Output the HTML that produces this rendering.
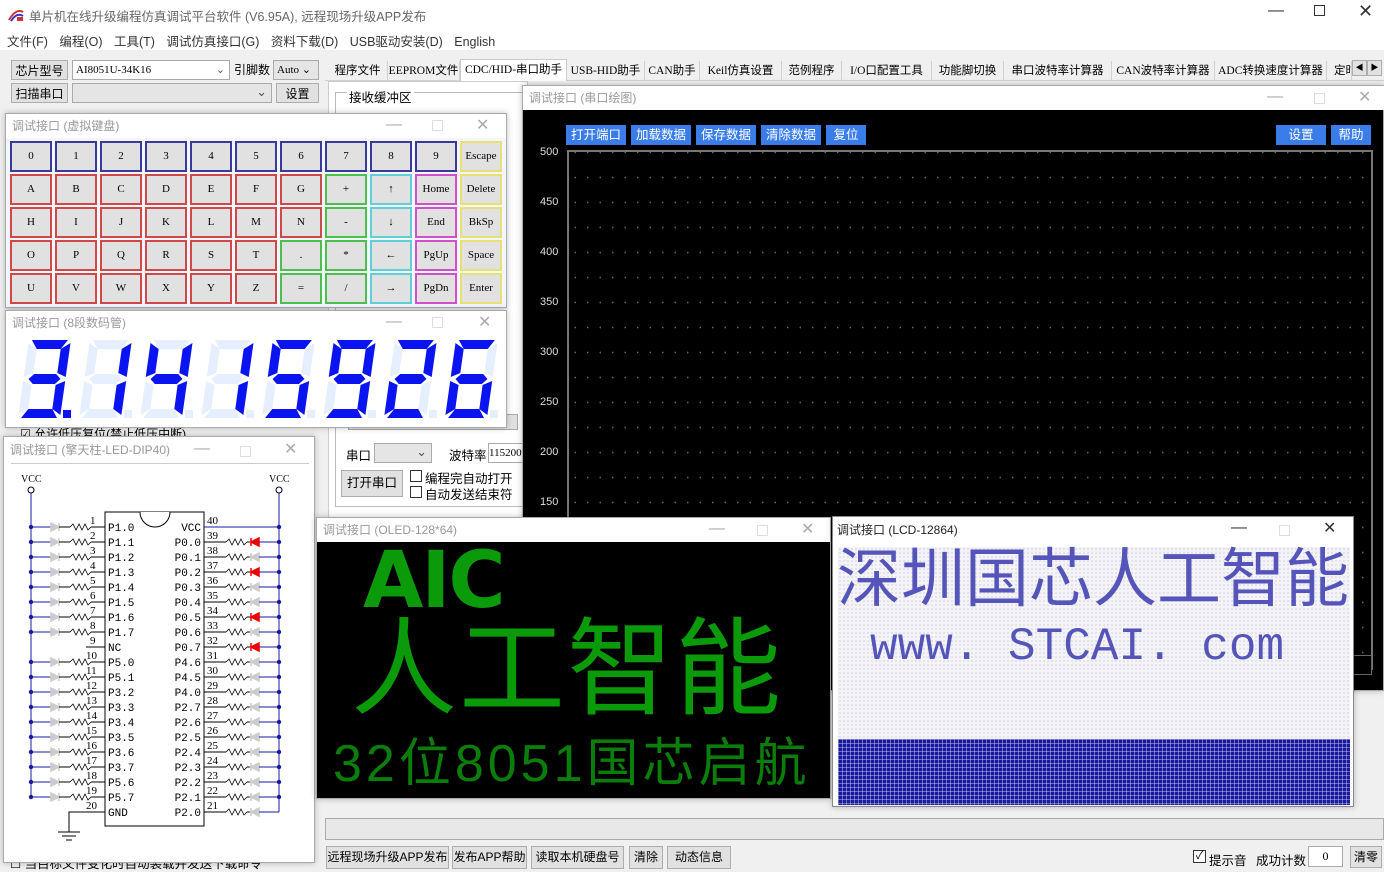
<!DOCTYPE html>
<html><head><meta charset="utf-8">
<style>
*{box-sizing:border-box;margin:0;padding:0}
body{width:1384px;height:870px;overflow:hidden;background:#f0f0f0;font-family:"Liberation Sans","Noto Sans CJK SC",sans-serif;font-size:13px;color:#000;position:relative}
.a{position:absolute;white-space:nowrap}
.btn{position:absolute;background:#e1e1e1;border:1px solid #adadad;text-align:center;font-size:12px;line-height:20px;white-space:nowrap;overflow:hidden}
.win{position:absolute;background:#fff;border:1px solid #aaa;box-shadow:0 0 6px rgba(0,0,0,.25)}
.tt{position:absolute;left:6px;top:3px;font-size:12px;color:#999;white-space:nowrap}
.ctl{position:absolute;top:0;font-size:16px;color:#aaa}
.mono{font-family:"Liberation Mono","Noto Sans CJK SC",monospace}
.tab{position:absolute;top:61px;height:20px;border-right:1px solid #d0d0d0;font-size:11.5px;line-height:20px;text-align:center;font-family:"Liberation Serif","Noto Sans CJK SC",serif;white-space:nowrap;overflow:hidden}
.key{position:absolute;width:42px;height:31px;background:#e1e1e1;border:2px solid;text-align:center;line-height:27px;font-family:"Liberation Serif",serif;font-size:11px}
.pb{position:absolute;top:125px;height:20px;background:#3a7de8;color:#fff;font-size:12.5px;line-height:20px;text-align:center}
.yl{position:absolute;left:540px;color:#ddd;font-size:11px}
</style></head><body>
<div class="a" style="left:0;top:0;width:1384px;height:28px;background:#fff"></div>
<svg class="a" style="left:8px;top:6px" width="16" height="16"><path d="M1 14 Q8 2 15 6" stroke="#c33" stroke-width="2" fill="none"/><path d="M3 15 Q9 6 15 10" stroke="#33c" stroke-width="2" fill="none"/><rect x="9" y="11" width="6" height="4" fill="#c33"/></svg>
<div class="a" style="left:29px;top:6px;font-size:12.5px;color:#666">单片机在线升级编程仿真调试平台软件 (V6.95A), 远程现场升级APP发布</div>
<div class="a" style="left:1268px;top:2px;font-size:16px;color:#333">—</div>
<div class="a" style="left:1314px;top:5px;width:11px;height:11px;border:1px solid #333"></div>
<div class="a" style="left:1358px;top:1px;font-size:18px;color:#333">✕</div>
<div class="a" style="left:0;top:28px;width:1384px;height:22px;background:#fff"></div>
<div class="a" style="left:7px;top:31px;font-size:12.5px;color:#333;word-spacing:8px">文件(F) 编程(O) 工具(T) 调试仿真接口(G) 资料下载(D) USB驱动安装(D) English</div>
<div class="btn" style="left:11px;top:60px;width:57px;height:20px">芯片型号</div>
<div class="a" style="left:72px;top:60px;width:158px;height:20px;background:#fff;border:1px solid #aaa;font-size:11px;line-height:18px;padding-left:3px;font-family:'Liberation Serif',serif">AI8051U-34K16<span style="position:absolute;right:4px;color:#555">⌄</span></div>
<div class="a" style="left:234px;top:61px;font-size:12px">引脚数</div>
<div class="a" style="left:273px;top:60px;width:46px;height:20px;background:#e5e5e5;border:1px solid #aaa;font-size:11px;line-height:18px;padding-left:3px;font-family:'Liberation Serif',serif">Auto ⌄</div>
<div class="btn" style="left:11px;top:83px;width:57px;height:20px">扫描串口</div>
<div class="a" style="left:72px;top:83px;width:200px;height:20px;background:#e5e5e5;border:1px solid #aaa"><span style="position:absolute;right:4px;color:#555">⌄</span></div>
<div class="btn" style="left:276px;top:83px;width:43px;height:20px">设置</div>
<div class="a" style="left:325px;top:80px;width:1059px;height:1px;background:#d0d0d0"></div>
<div class="tab" style="left:328px;width:60px">程序文件</div>
<div class="tab" style="left:388px;width:72px">EEPROM文件</div>
<div class="tab" style="left:460px;top:59px;height:22px;width:107px;background:#fff;border:1px solid #ccc;border-bottom:none">CDC/HID-串口助手</div>
<div class="tab" style="left:567px;width:78px">USB-HID助手</div>
<div class="tab" style="left:645px;width:55px">CAN助手</div>
<div class="tab" style="left:700px;width:82px">Keil仿真设置</div>
<div class="tab" style="left:782px;width:60px">范例程序</div>
<div class="tab" style="left:842px;width:90px">I/O口配置工具</div>
<div class="tab" style="left:932px;width:72px">功能脚切换</div>
<div class="tab" style="left:1004px;width:108px">串口波特率计算器</div>
<div class="tab" style="left:1112px;width:103px">CAN波特率计算器</div>
<div class="tab" style="left:1215px;width:112px">ADC转换速度计算器</div>
<div class="tab" style="left:1327px;width:25px;text-align:left;padding-left:7px">定时</div>
<div class="btn" style="left:1352px;top:60px;width:15px;height:16px;font-size:8px;line-height:14px">◀</div>
<div class="btn" style="left:1367px;top:60px;width:15px;height:16px;font-size:8px;line-height:14px">▶</div>
<div class="a" style="left:328px;top:81px;width:200px;height:437px;background:#fff;border:1px solid #ccc"></div>
<div class="a" style="left:335px;top:92px;width:190px;height:415px;border:1px solid #bbb"></div>
<div class="a" style="left:347px;top:87px;background:#fff;padding:0 2px;font-size:12.5px">接收缓冲区</div>
<div class="a" style="left:346px;top:445px;font-size:12.5px">串口</div>
<div class="a" style="left:374px;top:443px;width:58px;height:20px;background:#e5e5e5;border:1px solid #aaa"><span style="position:absolute;right:4px;color:#555">⌄</span></div>
<div class="a" style="left:449px;top:445px;font-size:12.5px">波特率</div>
<div class="a" style="left:488px;top:443px;width:36px;height:20px;background:#fff;border:1px solid #aaa;font-size:11px;line-height:18px;font-family:'Liberation Serif',serif;overflow:hidden">115200</div>
<div class="btn" style="left:341px;top:470px;width:62px;height:27px;line-height:25px;font-size:12.5px">打开串口</div>
<div class="a" style="left:410px;top:470px;width:12px;height:12px;border:1px solid #333;background:#fff"></div>
<div class="a" style="left:425px;top:468px;font-size:12.5px">编程完自动打开</div>
<div class="a" style="left:410px;top:486px;width:12px;height:12px;border:1px solid #333;background:#fff"></div>
<div class="a" style="left:425px;top:484px;font-size:12.5px">自动发送结束符</div>
<div class="a" style="left:348px;top:414px;width:170px;height:16px;border:1px solid #aaa;background:#e1e1e1"></div>
<div class="a" style="left:20px;top:425px;font-size:12px">☑ 允许低压复位(禁止低压中断)</div>
<div class="a" style="left:10px;top:853px;font-size:12.5px">☐ 当目标文件变化时自动装载并发送下载命令</div>
<div class="win" style="left:522px;top:85px;width:862px;height:606px;background:#000">
<div class="a" style="left:0;top:0;width:862px;height:24px;background:#fff"></div>
<div class="tt">调试接口 (串口绘图)</div>
<div class="ctl" style="left:744px;top:2px">—</div><div class="a" style="left:791px;top:7px;width:11px;height:11px;border:1px solid #ddd"></div><div class="ctl" style="left:835px;top:1px">✕</div>
</div>
<div class="pb" style="left:566px;width:60px">打开端口</div>
<div class="pb" style="left:631px;width:60px">加载数据</div>
<div class="pb" style="left:696px;width:60px">保存数据</div>
<div class="pb" style="left:761px;width:60px">清除数据</div>
<div class="pb" style="left:826px;width:40px">复位</div>
<div class="pb" style="left:1276px;width:50px">设置</div>
<div class="pb" style="left:1331px;width:40px">帮助</div>
<div class="a" style="left:567px;top:150px;width:806px;height:520px;border:2px solid #777;border-bottom:none;background-image:radial-gradient(circle,#666 0.7px,transparent 1px);background-size:12.5px 25px;background-position:0 -12px"></div>
<div class="yl" style="top:146px">500</div><div class="yl" style="top:196px">450</div><div class="yl" style="top:246px">400</div><div class="yl" style="top:296px">350</div><div class="yl" style="top:346px">300</div><div class="yl" style="top:396px">250</div><div class="yl" style="top:446px">200</div><div class="yl" style="top:496px">150</div>
<div class="a" style="left:1352px;top:655px;width:20px;height:20px;border:1px solid #666"></div>
<div class="win" id="kb" style="left:5px;top:113px;width:502px;height:195px;background:#f3f6fc">
<div class="a" style="left:0;top:0;width:500px;height:24px;background:#fff"></div>
<div class="tt">调试接口 (虚拟键盘)</div>
<div class="ctl" style="left:380px;top:2px">—</div><div class="a" style="left:426px;top:6px;width:11px;height:11px;border:1px solid #ddd"></div><div class="ctl" style="left:470px;top:1px">✕</div>
</div>
<div class="win" style="left:5px;top:310px;width:502px;height:118px">
<div class="tt">调试接口 (8段数码管)</div>
<div class="ctl" style="left:380px;top:2px">—</div><div class="a" style="left:426px;top:6px;width:11px;height:11px;border:1px solid #ddd"></div><div class="ctl" style="left:472px;top:1px">✕</div>
<svg id="seg" class="a" style="left:0;top:22px" width="500" height="95"></svg>
</div>
<div class="win" style="left:3px;top:436px;width:312px;height:427px">
<div class="tt" style="top:4px">调试接口 (擎天柱-LED-DIP40)</div>
<div class="ctl" style="left:190px;top:3px">—</div><div class="a" style="left:236px;top:9px;width:11px;height:11px;border:1px solid #ddd"></div><div class="ctl" style="left:280px;top:2px">✕</div>
<div class="a" style="left:7px;top:26px;width:298px;height:1px;background:#ccc"></div>
</div>
<svg id="dip" class="a" style="left:0;top:0" width="320" height="870"></svg>
<div class="win" style="left:316px;top:517px;width:515px;height:282px;background:#000;overflow:hidden">
<div class="a" style="left:0;top:0;width:515px;height:24px;background:#fff"></div>
<div class="tt">调试接口 (OLED-128*64)</div>
<div class="ctl" style="left:392px;top:2px">—</div><div class="a" style="left:440px;top:7px;width:11px;height:11px;border:1px solid #ddd"></div><div class="ctl" style="left:484px;top:1px">✕</div>
<div class="a" style="left:46px;top:18px;font-size:78px;font-weight:bold;color:#0a9a0a;letter-spacing:-2px;font-family:'DejaVu Sans',sans-serif">AIC</div>
<div class="a" style="left:34px;top:92px;font-size:106px;line-height:120px;color:#0a9a0a;font-family:'WenQuanYi Zen Hei',sans-serif;letter-spacing:2px">人工智能</div>
<div class="a" style="left:16px;top:216px;font-size:52px;line-height:60px;color:#0b7d0b;font-family:'WenQuanYi Zen Hei',sans-serif;letter-spacing:4px">32位8051国芯启航</div>
</div>
<div class="win" style="left:832px;top:516px;width:522px;height:291px;border-color:#888">
<div class="a" style="left:4px;top:4px;font-size:12px;color:#222">调试接口 (LCD-12864)</div>
<div class="ctl" style="left:398px;top:2px;color:#333">—</div><div class="a" style="left:446px;top:8px;width:11px;height:11px;border:1px solid #ddd"></div><div class="ctl" style="left:490px;top:1px;color:#333">✕</div>
<div class="a" style="left:5px;top:30px;width:512px;height:256px;background:#f4f4f8;background-image:radial-gradient(circle,#e2e2e8 1.1px,transparent 1.3px);background-size:4px 4px"></div>
<div class="a" style="left:4px;top:26px;font-size:64px;line-height:72px;color:#3a3ab0;font-family:'WenQuanYi Zen Hei',sans-serif;opacity:.85">深圳国芯人工智能</div>
<div class="a" style="left:37px;top:100px;font-size:46px;line-height:60px;color:#3a3ab0;font-family:'Liberation Mono',monospace;letter-spacing:0px;opacity:.85">www. STCAI. com</div>
<div class="a" style="left:5px;top:222px;width:512px;height:66px;background:#1a1aa0;background-image:linear-gradient(90deg,rgba(255,255,255,.35) 1px,transparent 1px),linear-gradient(rgba(255,255,255,.35) 1px,transparent 1px);background-size:4px 4px"></div>
</div>
<div class="a" style="left:325px;top:818px;width:1059px;height:22px;background:#e8e8e8;border:1px solid #aaa"></div>
<div class="btn" style="left:326px;top:846px;width:123px;height:23px">远程现场升级APP发布</div>
<div class="btn" style="left:452px;top:846px;width:75px;height:23px">发布APP帮助</div>
<div class="btn" style="left:531px;top:846px;width:93px;height:23px">读取本机硬盘号</div>
<div class="btn" style="left:629px;top:846px;width:34px;height:23px">清除</div>
<div class="btn" style="left:667px;top:846px;width:64px;height:23px">动态信息</div>
<div class="a" style="left:1193px;top:850px;width:13px;height:13px;border:1px solid #333;background:#fff;font-size:11px;line-height:11px;text-align:center">✓</div>
<div class="a" style="left:1209px;top:850px;font-size:12.5px">提示音</div>
<div class="a" style="left:1256px;top:850px;font-size:12.5px">成功计数</div>
<div class="a" style="left:1308px;top:846px;width:35px;height:21px;background:#fff;border:1px solid #aaa;text-align:center;font-size:12px;line-height:19px;font-family:'Liberation Serif',serif">0</div>
<div class="btn" style="left:1350px;top:846px;width:32px;height:22px">清零</div>
<script>
var rows=[["0","1","2","3","4","5","6","7","8","9","Escape"],["A","B","C","D","E","F","G","+","↑","Home","Delete"],["H","I","J","K","L","M","N","-","↓","End","BkSp"],["O","P","Q","R","S","T",".","*","←","PgUp","Space"],["U","V","W","X","Y","Z","=","/","→","PgDn","Enter"]];
var cols={b:"#3a3a9a",r:"#d04848",g:"#4cc04c",c:"#60d0d8",m:"#d050c8",y:"#e8e070"};
var kb=document.getElementById('kb'),h='';
rows.forEach(function(r,ri){r.forEach(function(k,ci){var c;
if(ci==10)c=cols.y;else if(ci==9)c=ri==0?cols.b:cols.m;else if(ci==8)c=ri==0?cols.b:cols.c;else if(ri==0)c=cols.b;
else if(ci==7)c=cols.g;else if(ci==6)c=(ri<=2)?cols.r:cols.g;else c=cols.r;
h+='<div class="key" style="left:'+(4+45*ci)+'px;top:'+(27+33*ri)+'px;border-color:'+c+'">'+k+'</div>';});});
kb.insertAdjacentHTML('beforeend',h);
var S={0:"abcdef",1:"bc",2:"abdeg",3:"abcdg",4:"bcfg",5:"acdfg",6:"acdefg",7:"abc",8:"abcdefg",9:"abcdfg"};
var digs=["3","1","4","1","5","9","2","6"],s='';
function seg(x0,on){var o='';var W=42,H=78,t=9;
var P={a:[[3,0],[W-3,0],[W-9,t],[9,t]],d:[[3,H],[W-3,H],[W-9,H-t],[9,H-t]],g:[[5,H/2],[10,H/2-5],[W-10,H/2-5],[W-5,H/2],[W-10,H/2+5],[10,H/2+5]],
f:[[0,3],[t,9],[t,H/2-6],[0,H/2-2]],e:[[0,H/2+2],[t,H/2+6],[t,H-9],[0,H-3]],b:[[W,3],[W-t,9],[W-t,H/2-6],[W,H/2-2]],c:[[W,H/2+2],[W-t,H/2+6],[W-t,H-9],[W,H-3]]};
for(var k in P){var pts=P[k].map(function(p){return (x0+p[0]+(H-p[1])*0.14).toFixed(1)+','+(7+p[1])}).join(' ');
o+='<polygon points="'+pts+'" fill="'+(on.indexOf(k)>=0?'#0a14f0':'#e6efff')+'"/>';}return o;}
digs.forEach(function(d,i){var x=12+i*61;s+=seg(x,S[d]);s+='<rect x="'+(x+45)+'" y="'+77+'" width="8" height="8" fill="'+(i==0?'#0a14f0':'#e6efff')+'"/>';});
document.getElementById('seg').innerHTML=s;
var L=["P1.0","P1.1","P1.2","P1.3","P1.4","P1.5","P1.6","P1.7","NC","P5.0","P5.1","P3.2","P3.3","P3.4","P3.5","P3.6","P3.7","P5.6","P5.7","GND"];
var R=["VCC","P0.0","P0.1","P0.2","P0.3","P0.4","P0.5","P0.6","P0.7","P4.6","P4.5","P4.0","P2.7","P2.6","P2.5","P2.4","P2.3","P2.2","P2.1","P2.0"];
var red=[39,37,34,32],B='#1a1aa0',d='';
d+='<g font-family="Liberation Serif" font-size="10" fill="#000">';
d+='<text x="21" y="482">VCC</text><text x="269" y="482">VCC</text></g>';
d+='<circle cx="31" cy="490" r="3" fill="#fff" stroke="#000"/><circle cx="279" cy="490" r="3" fill="#fff" stroke="#000"/>';
d+='<line x1="31" y1="493" x2="31" y2="797" stroke="'+B+'"/><line x1="279" y1="493" x2="279" y2="812" stroke="'+B+'"/>';
d+='<rect x="105" y="512" width="99" height="314" fill="#fff" stroke="#000"/><path d="M140 512 A15 15 0 0 0 170 512" fill="#fff" stroke="#000"/>';
function res(x,y){return '<path d="M'+x+' '+y+' l3 -3 l3 6 l3 -6 l3 6 l3 -6 l3 6 l3 -3" fill="none" stroke="#000" stroke-width=".8"/>';}
for(var i=0;i<20;i++){var y=527+15*i,p=i+1;
 d+='<text x="'+(p<10?90:86)+'" y="'+(y-3)+'" font-size="11" font-family="Liberation Serif">'+p+'</text>';
 d+='<text x="108" y="'+(y+4)+'" font-size="11" font-family="Liberation Mono">'+L[i]+'</text>';
 if(p==9){d+='<line x1="86" y1="'+y+'" x2="105" y2="'+y+'" stroke="#000"/>';}
 else if(p==20){d+='<path d="M105 812 H69 V832 M58 832 H80 M62 836 H76 M66 840 H72" stroke="#000" fill="none"/>';}
 else{d+='<line x1="31" y1="'+y+'" x2="51" y2="'+y+'" stroke="'+B+'"/><circle cx="31" cy="'+y+'" r="2.2" fill="'+B+'"/>';
 d+='<path d="M51 '+(y-4)+' L59 '+y+' L51 '+(y+4)+'Z M59 '+(y-4)+' V'+(y+4)+'" fill="#ccc" stroke="#ccc" stroke-width="1.5"/>';
 d+='<line x1="59" y1="'+y+'" x2="70" y2="'+y+'" stroke="#000"/>'+res(70,y)+'<line x1="91" y1="'+y+'" x2="105" y2="'+y+'" stroke="#000"/>';}
 var q=40-i,rc=red.indexOf(q)>=0?'#e00':'#ccc';
 d+='<text x="207" y="'+(y-3)+'" font-size="11" font-family="Liberation Serif">'+q+'</text>';
 d+='<text x="'+(201-R[i].length*6.6)+'" y="'+(y+4)+'" font-size="11" font-family="Liberation Mono">'+R[i]+'</text>';
 if(q==40){d+='<line x1="204" y1="'+y+'" x2="279" y2="'+y+'" stroke="'+B+'"/><circle cx="279" cy="'+y+'" r="2.2" fill="'+B+'"/>';}
 else{d+='<line x1="204" y1="'+y+'" x2="226" y2="'+y+'" stroke="#000"/>'+res(226,y)+'<line x1="247" y1="'+y+'" x2="251" y2="'+y+'" stroke="#000"/>';
 d+='<path d="M259 '+(y-4)+' L251 '+y+' L259 '+(y+4)+'Z M251 '+(y-4)+' V'+(y+4)+'" fill="'+rc+'" stroke="'+rc+'" stroke-width="1.5"/>';
 d+='<line x1="259" y1="'+y+'" x2="279" y2="'+y+'" stroke="'+B+'"/>'+(q>21?'<circle cx="279" cy="'+y+'" r="2.2" fill="'+B+'"/>':'');}
}
document.getElementById('dip').innerHTML=d;
</script>
</body></html>
